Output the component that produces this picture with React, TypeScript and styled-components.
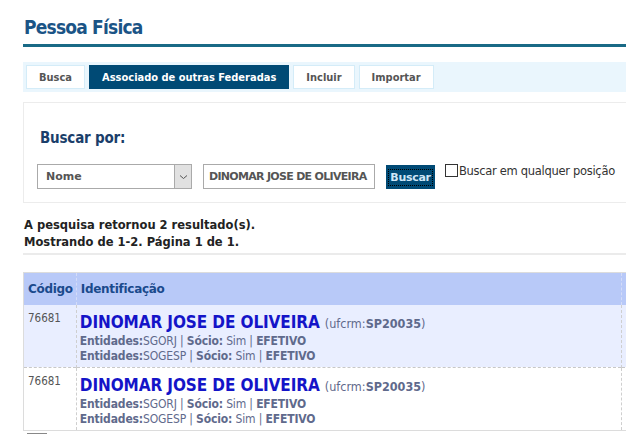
import React from "react";
import styled, { createGlobalStyle } from "styled-components";

const Global = createGlobalStyle`
  html, body { margin: 0; padding: 0; background: #fff; overflow: hidden; }
  body { font-family: "DejaVu Sans", Verdana, sans-serif; width: 626px; }
  * { box-sizing: border-box; }
`;

const Cond = `"DejaVu Sans Condensed", "DejaVu Sans", sans-serif`;

const Page = styled.div`
  padding: 15px 0 0 23px;
  width: 626px;
  overflow: hidden;
`;

const Title = styled.h1`
  margin: 0;
  font-family: ${Cond};
  font-size: 19px;
  font-weight: bold;
  color: #1b5486;
  letter-spacing: -0.8px;
  padding: 0 0 5px 1px;
  border-bottom: 3px solid #196a86;
  line-height: 24px;
`;

const TabBar = styled.div`
  margin-top: 15px;
  height: 30px;
  background: #eaf6fd;
  padding: 3px;
  display: flex;
  gap: 4px;
`;

const Tab = styled.div<{ $active?: boolean }>`
  height: 24px;
  display: flex;
  align-items: center;
  padding: 0 12px;
  border: 1px solid ${(p) => (p.$active ? "#004a75" : "#d4ecf8")};
  background: ${(p) => (p.$active ? "#004a75" : "#fff")};
  color: ${(p) => (p.$active ? "#fff" : "#555")};
  font-family: ${Cond};
  font-size: 11px;
  font-weight: bold;
`;

const Panel = styled.div`
  margin-top: 10px;
  height: 101px;
  border: 1px solid #ececec;
  border-right: none;
  padding: 26px 0 0 13px;
`;

const PanelTitle = styled.div`
  font-family: ${Cond};
  font-size: 15px;
  font-weight: bold;
  color: #1b3e6a;
  padding-left: 3px;
  line-height: 18px;
  letter-spacing: -0.2px;
`;

const Controls = styled.div`
  margin-top: 17px;
  display: flex;
  align-items: flex-start;
`;

const Select = styled.div`
  width: 155px;
  height: 25px;
  border: 1px solid #aaa;
  display: flex;
  align-items: stretch;
`;

const SelectText = styled.div`
  flex: 1;
  display: flex;
  align-items: center;
  padding-left: 8px;
  font-size: 11px;
  font-weight: bold;
  color: #555;
`;

const SelectArrow = styled.div`
  width: 17px;
  background: #e1e1e1;
  border-left: 1px solid #aaa;
  display: flex;
  align-items: center;
  justify-content: center;
`;

const TextInput = styled.div`
  margin-left: 11px;
  width: 172px;
  height: 25px;
  border: 1px solid #aaa;
  display: flex;
  align-items: center;
  padding-left: 5px;
  font-size: 11px;
  font-weight: bold;
  color: #555;
  letter-spacing: -0.7px;
  white-space: nowrap;
  overflow: hidden;
`;

const SearchButton = styled.div`
  margin-left: 11px;
  margin-top: 1px;
  width: 49px;
  height: 24px;
  background: #004a75;
  display: flex;
  align-items: center;
  justify-content: center;
`;

const SearchLabel = styled.span`
  color: #cfe6f7;
  font-size: 11px;
  font-weight: bold;
  letter-spacing: -0.3px;
  outline: 1px dotted #000;
  padding: 1px 1px;
`;

const CheckLabel = styled.label`
  margin-left: 10px;
  display: flex;
  align-items: flex-start;
  font-size: 11.5px;
  color: #333;
  white-space: nowrap;
  letter-spacing: -0.3px;
`;

const Box = styled.span`
  width: 13px;
  height: 13px;
  border: 1px solid #333;
  display: inline-block;
  margin-right: 1px;
  background: #fff;
`;

const Summary = styled.div`
  margin-top: 14px;
  font-size: 11.5px;
  font-weight: bold;
  color: #222;
  line-height: 17px;
  padding: 0 0 2px 1px;
  border-bottom: 2px solid #ebebeb;
`;

const Table = styled.table`
  margin-top: 17px;
  width: 720px;
  border-collapse: collapse;
  border: 1px solid #dcdcdc;
`;

const Th = styled.th<{ $bold?: boolean }>`
  background: #b8c9f8;
  height: 32px;
  text-align: left;
  font-size: 12px;
  font-weight: ${(p) => (p.$bold ? "bold" : "600")};
  color: #1a4a8c;
  padding: 0 3px 0 4px;
  border-right: 1px dashed #d4dcf8;
  letter-spacing: -0.3px;
`;

const Tr = styled.tr<{ $alt?: boolean }>`
  background: ${(p) => (p.$alt ? "#e9eeff" : "#fff")};
  border-bottom: 1px dashed #c8c8c8;
`;

const Td = styled.td<{ $w?: number }>`
  vertical-align: top;
  padding: 7px 3px 3px 3px;
  border-right: 1px dashed #cfcfcf;
  height: 60px;
  width: ${(p) => (p.$w ? `${p.$w}px` : "auto")};
`;

const Code = styled.div`
  font-family: ${Cond};
  font-size: 11.5px;
  color: #555;
  padding-left: 1px;
  line-height: 14px;
  margin-top: -1px;
`;

const NameLine = styled.div`
  white-space: nowrap;
  line-height: 21px;
`;

const Name = styled.span`
  font-family: ${Cond};
  font-size: 17px;
  font-weight: bold;
  color: #1414c8;
  letter-spacing: -0.1px;
`;

const Ufcrm = styled.span`
  font-family: ${Cond};
  font-size: 12.5px;
  color: #5f6a8c;
  b { font-weight: bold; }
`;

const InfoLine = styled.div`
  font-family: ${Cond};
  font-size: 12px;
  color: #5f6a8c;
  line-height: 15px;
  white-space: nowrap;
  letter-spacing: -0.15px;
  b { font-weight: bold; }
`;

const Footer = styled.div`
  margin: 2px 0 0 4px;
  width: 20px;
  height: 10px;
  border: 1px solid #888;
  border-bottom: none;
`;

const rows = [
  { code: "76681", alt: true },
  { code: "76681", alt: false },
];

export default function App() {
  return (
    <>
      <Global />
      <Page>
        <Title>Pessoa Física</Title>
        <TabBar>
          <Tab>Busca</Tab>
          <Tab $active>Associado de outras Federadas</Tab>
          <Tab>Incluir</Tab>
          <Tab>Importar</Tab>
        </TabBar>
        <Panel>
          <PanelTitle>Buscar por:</PanelTitle>
          <Controls>
            <Select>
              <SelectText>Nome</SelectText>
              <SelectArrow>
                <svg width="9" height="6" viewBox="0 0 9 6">
                  <path d="M1 1.5 L4.5 4.5 L8 1.5" fill="none" stroke="#555" strokeWidth="1" />
                </svg>
              </SelectArrow>
            </Select>
            <TextInput>DINOMAR JOSE DE OLIVEIRA</TextInput>
            <SearchButton>
              <SearchLabel>Buscar</SearchLabel>
            </SearchButton>
            <CheckLabel>
              <Box />
              Buscar em qualquer posição
            </CheckLabel>
          </Controls>
        </Panel>
        <Summary>
          A pesquisa retornou 2 resultado(s).
          <br />
          Mostrando de 1-2. Página 1 de 1.
        </Summary>
        <Table>
          <thead>
            <tr>
              <Th $bold style={{ width: 52 }}>Código</Th>
              <Th style={{ width: 545 }}>Identificação</Th>
              <Th />
            </tr>
          </thead>
          <tbody>
            {rows.map((r, i) => (
              <Tr key={i} $alt={r.alt}>
                <Td $w={52}>
                  <Code>{r.code}</Code>
                </Td>
                <Td>
                  <NameLine>
                    <Name>DINOMAR JOSE DE OLIVEIRA</Name>{" "}
                    <Ufcrm>
                      (ufcrm:<b>SP20035</b>)
                    </Ufcrm>
                  </NameLine>
                  <InfoLine>
                    <b>Entidades:</b>SGORJ | <b>Sócio:</b> Sim | <b>EFETIVO</b>
                  </InfoLine>
                  <InfoLine>
                    <b>Entidades:</b>SOGESP | <b>Sócio:</b> Sim | <b>EFETIVO</b>
                  </InfoLine>
                </Td>
                <Td />
              </Tr>
            ))}
          </tbody>
        </Table>
        <Footer />
      </Page>
    </>
  );
}
